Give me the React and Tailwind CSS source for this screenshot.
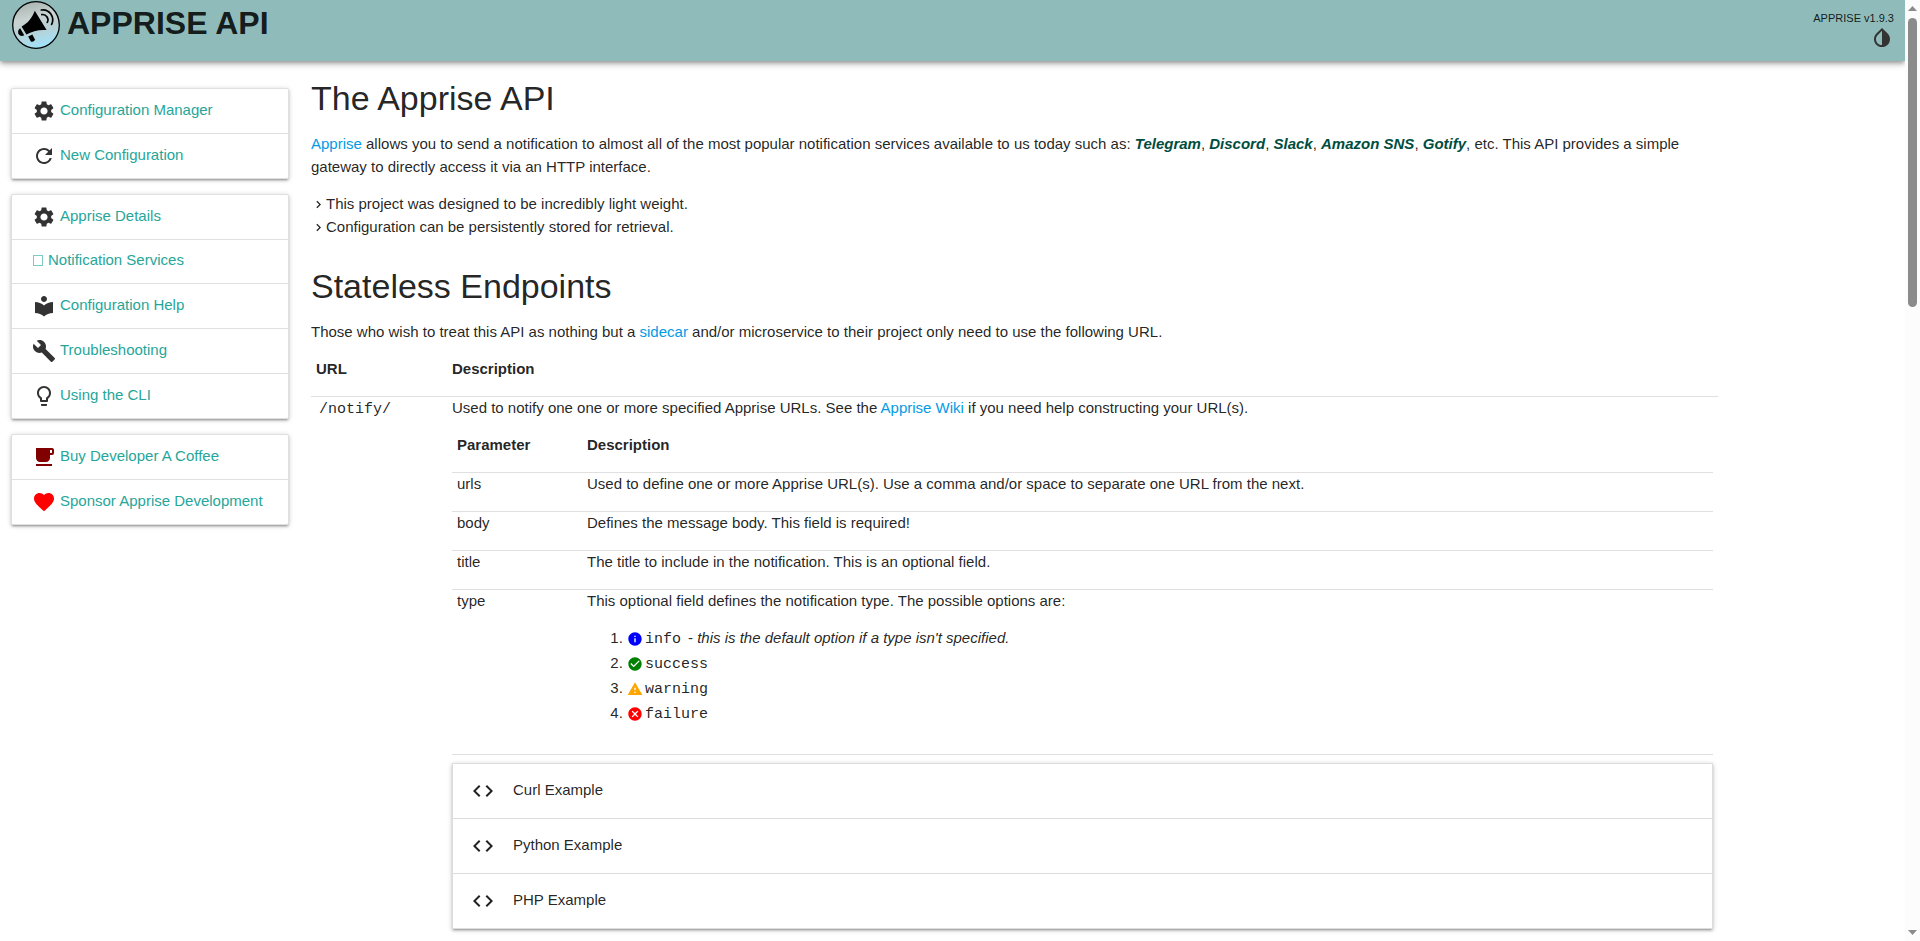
import {
  MdSettings, MdRefresh, MdLocalLibrary, MdBuild, MdLightbulbOutline, MdFreeBreakfast,
  MdFavorite, MdInvertColors, MdCode, MdInfo, MdCheckCircle, MdWarning, MdCancel, MdChevronRight,
} from "react-icons/md";

const shadow1 = "shadow-[0_2px_2px_0_rgba(0,0,0,0.14),0_3px_1px_-2px_rgba(0,0,0,0.12),0_1px_5px_0_rgba(0,0,0,0.2)]";
const shadow2 = "shadow-[0_4px_5px_0_rgba(0,0,0,0.14),0_1px_10px_0_rgba(0,0,0,0.12),0_2px_4px_-1px_rgba(0,0,0,0.3)]";

const menus = [
  [
    { label: "Configuration Manager", icon: MdSettings, color: "text-[#333]" },
    { label: "New Configuration", icon: MdRefresh, color: "text-[#333]" },
  ],
  [
    { label: "Apprise Details", icon: MdSettings, color: "text-[#333]" },
    { label: "Notification Services", icon: null },
    { label: "Configuration Help", icon: MdLocalLibrary, color: "text-[#333]" },
    { label: "Troubleshooting", icon: MdBuild, color: "text-[#333]" },
    { label: "Using the CLI", icon: MdLightbulbOutline, color: "text-[#333]" },
  ],
  [
    { label: "Buy Developer A Coffee", icon: MdFreeBreakfast, color: "text-[maroon]" },
    { label: "Sponsor Apprise Development", icon: MdFavorite, color: "text-[red]" },
  ],
];

const types = [
  { name: "info", icon: MdInfo, color: "text-[blue]", note: "this is the default option if a type isn't specified." },
  { name: "success", icon: MdCheckCircle, color: "text-[green]" },
  { name: "warning", icon: MdWarning, color: "text-[orange]" },
  { name: "failure", icon: MdCancel, color: "text-[red]" },
];

const params = [
  ["urls", "Used to define one or more Apprise URL(s). Use a comma and/or space to separate one URL from the next."],
  ["body", "Defines the message body. This field is required!"],
  ["title", "The title to include in the notification. This is an optional field."],
];

function Logo() {
  return (
    <svg viewBox="0 0 48 48" className="size-12 shrink-0" aria-hidden="true">
      <defs>
        <linearGradient id="disc" x1="0.35" y1="0" x2="0.6" y2="1">
          <stop offset="0" stopColor="#a9b5b2" />
          <stop offset="0.35" stopColor="#c9d3d1" />
          <stop offset="0.6" stopColor="#b9d0d4" />
          <stop offset="1" stopColor="#9fe3fb" />
        </linearGradient>
      </defs>
      <circle cx="24" cy="24" r="23.3" fill="url(#disc)" stroke="#000" strokeWidth="1.3" />
      <path d="M22.8 9.8 L34.6 29 C27 28.4 20 30 14.4 33.6 L9.6 25.6 C15.3 22.6 20.3 17 22.8 9.8 Z" />
      <path d="M8.2 27.2 L12.2 34.2 C9.6 36 7 34.4 6.3 32.2 C5.7 30.2 6.4 28.2 8.2 27.2 Z" />
      <path d="M16.2 35.6 L20.4 33.6 L22.8 38.2 C23.2 40 20 41.6 18.7 40.2 Z" />
      <g fill="none" stroke="#000" strokeWidth="1.7" strokeLinecap="round">
        <path d="M29.8 13.6 C34 12.8 37.4 17.8 35.3 21.4" />
        <path d="M29.3 9 C37.4 7.6 43.2 16.4 39.6 23.4" />
      </g>
    </svg>
  );
}

function Menu({ items }) {
  return (
    <ul className={`mb-[15px] rounded-[2px] border border-[#e0e0e0] bg-white ${shadow1}`}>
      {items.map(({ label, icon: Icon, color }) => (
        <li key={label} className="border-b border-[#e0e0e0] last:border-b-0">
          <a href="#" className={`flex items-center gap-1 px-5 text-[#26a69a] ${Icon ? "h-11" : "h-[43px]"}`}>
            {Icon ? (
              <Icon className={`size-6 shrink-0 ${color}`} />
            ) : (
              <span className="mx-px mb-[2px] h-[11px] w-[10px] border border-[#26a69a]/60" aria-hidden="true" />
            )}
            <span className="pb-1">{label}</span>
          </a>
        </li>
      ))}
    </ul>
  );
}

function Link({ children }) {
  return <a href="#" className="text-[#039be5]">{children}</a>;
}

function Service({ children }) {
  return <em className="font-bold text-[#004d40]">{children}</em>;
}

function Scrollbar() {
  return (
    <div className="sticky top-0 flex h-screen w-[15px] shrink-0 flex-col items-center bg-[#fcfcfc]" aria-hidden="true">
      <svg viewBox="0 0 15 18" className="h-[18px] w-[15px]"><path d="M7.5 6 L12 11 H3 Z" fill="#8b8b8b" /></svg>
      <div className="h-[289px] w-[9px] rounded-full bg-[#8b8b8b]" />
      <div className="grow" />
      <svg viewBox="0 0 15 18" className="h-[18px] w-[15px]"><path d="M7.5 12 L12 7 H3 Z" fill="#8b8b8b" /></svg>
    </div>
  );
}

export default function App() {
  return (
    <div className="flex items-start bg-white font-['Liberation_Sans',Arial,sans-serif] text-[15px] leading-[23px] text-black/87">
      <div className="min-w-0 grow">
        <header className={`flex h-[61px] items-start justify-between bg-[#8fbcbb] pr-[11px] pl-3 ${shadow2}`}>
          <div className="flex gap-[7px] pt-px">
            <Logo />
            <h1 className="text-[32px] leading-[44px] font-bold">APPRISE API</h1>
          </div>
          <div className="flex flex-col items-end pt-2">
            <span className="text-[11px] leading-5">APPRISE v1.9.3</span>
            <button type="button" aria-label="Toggle theme" className="-mt-[2px] text-[#333]">
              <MdInvertColors className="size-6" />
            </button>
          </div>
        </header>

        <div className="flex">
          <nav className="w-[300px] shrink-0 px-[11px] pt-[27px]">
            {menus.map((items) => <Menu key={items[0].label} items={items} />)}
          </nav>

          <main className="min-w-0 grow px-[11px] pb-3">
            <div className="max-w-[1407px]">
              <h2 className="pt-[18px] pb-[15px] text-[34px] leading-[38px]">The Apprise API</h2>
              <p>
                <Link>Apprise</Link> allows you to send a notification to almost all of the most popular notification
                services available to us today such as: <Service>Telegram</Service>, <Service>Discord</Service>,{" "}
                <Service>Slack</Service>, <Service>Amazon SNS</Service>, <Service>Gotify</Service>, etc. This API
                provides a simple gateway to directly access it via an HTTP interface.
              </p>
              <ul className="pt-[14px]">
                {[
                  "This project was designed to be incredibly light weight.",
                  "Configuration can be persistently stored for retrieval.",
                ].map((text) => (
                  <li key={text} className="flex items-center">
                    <MdChevronRight className="mt-[2px] size-[15px]" />
                    <span>{text}</span>
                  </li>
                ))}
              </ul>

              <h2 className="pt-[29px] pb-[15px] text-[34px] leading-[38px]">Stateless Endpoints</h2>
              <p>
                Those who wish to treat this API as nothing but a <Link>sidecar</Link> and/or microservice to their
                project only need to use the following URL.
              </p>

              <table className="mt-[15px] w-full border-collapse text-left leading-[22px]">
                <thead>
                  <tr className="border-b border-black/12">
                    <th className="w-[136px] px-[5px] pb-4">URL</th>
                    <th className="px-[5px] pb-4">Description</th>
                  </tr>
                </thead>
                <tbody>
                  <tr className="align-top">
                    <td className="px-[5px]">
                      <code className="ml-[3px] font-['Liberation_Mono',monospace]">/notify/</code>
                    </td>
                    <td className="px-[5px]">
                      <p>
                        Used to notify one one or more specified Apprise URLs. See the <Link>Apprise Wiki</Link> if you
                        need help constructing your URL(s).
                      </p>
                      <table className="mt-[15px] w-full border-collapse text-left">
                        <thead>
                          <tr className="border-b border-black/12">
                            <th className="w-[130px] px-[5px] pb-4">Parameter</th>
                            <th className="px-[5px] pb-4">Description</th>
                          </tr>
                        </thead>
                        <tbody>
                          {params.map(([name, text]) => (
                            <tr key={name} className="border-b border-black/12">
                              <td className="px-[5px] pb-4">{name}</td>
                              <td className="px-[5px] pb-4">{text}</td>
                            </tr>
                          ))}
                          <tr className="border-b border-black/12 align-top">
                            <td className="px-[5px]">type</td>
                            <td className="px-[5px] pb-[27px]">
                              <p>This optional field defines the notification type. The possible options are:</p>
                              <ol className="list-decimal pt-[15px] pl-10">
                                {types.map(({ name, icon: Icon, color, note }) => (
                                  <li key={name} className="h-[25px]">
                                    <Icon className={`mb-px inline size-4 ${color}`} />
                                    <code className="ml-[2px] font-['Liberation_Mono',monospace]">{name}</code>
                                    {note && <span className="ml-[7px]">- <em>{note}</em></span>}
                                  </li>
                                ))}
                              </ol>
                            </td>
                          </tr>
                        </tbody>
                      </table>
                      <ul className={`mt-2 border border-[#ddd] bg-white ${shadow1}`}>
                        {["Curl Example", "Python Example", "PHP Example"].map((label) => (
                          <li key={label} className="border-b border-[#ddd] last:border-b-0">
                            <button type="button" className="flex w-full items-center p-[15px] text-left">
                              <MdCode className="mr-[18px] ml-[3px] size-6" />
                              <span className="pb-[2px]">{label}</span>
                            </button>
                          </li>
                        ))}
                      </ul>
                    </td>
                  </tr>
                </tbody>
              </table>
            </div>
          </main>
        </div>
      </div>
      <Scrollbar />
    </div>
  );
}
